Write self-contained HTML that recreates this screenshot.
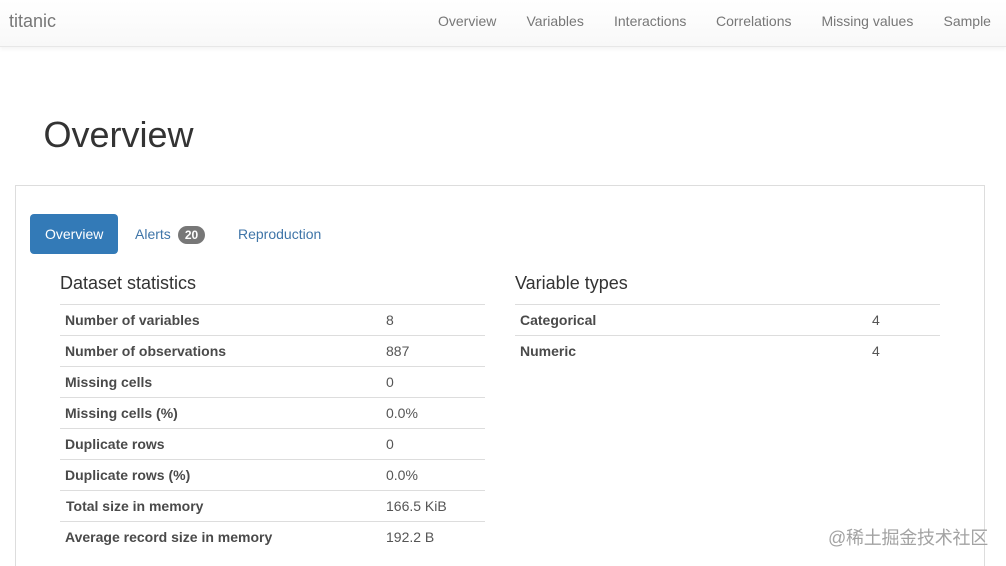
<!DOCTYPE html>
<html lang="en"><head><meta charset="utf-8"><title>titanic</title>
<style>
html,body{margin:0;padding:0;background:#fff;width:1006px;height:566px;overflow:hidden}
body{position:relative;font-family:"Liberation Sans",sans-serif;font-size:14px;color:#444}
.a{position:absolute;white-space:nowrap;line-height:20px;filter:blur(.25px)}
#nav{position:absolute;left:0;top:0;width:1006px;height:46px;background:linear-gradient(#fff,#f8f8f8);border-bottom:1px solid #e7e7e7;box-shadow:0 2px 4px rgba(0,0,0,.05)}
.n{color:#777;top:11px}
#panel{position:absolute;left:15px;top:185px;width:968px;height:380px;border:1px solid #ddd;border-bottom:0}
#tab{position:absolute;left:30px;top:214px;width:88px;height:40px;background:#337ab7;border-radius:4px}
#badge{position:absolute;left:178px;top:226px;width:27px;height:18px;border-radius:9px;background:#777;color:#fff;font-weight:bold;font-size:12px;line-height:18px;text-align:center}
.l{position:absolute;height:1px;background:#ddd}
.h{font-size:18px;color:#333}
.b{font-weight:bold;color:#4a4a4a}
.v{color:#555}
.t{color:#3f75a8}
</style></head><body>
<div id="nav"></div>
<div class="a" style="left:9px;top:11px;font-size:18px;color:#777">titanic</div>
<div class="a n" style="left:438px">Overview</div>
<div class="a n" style="left:526.5px">Variables</div>
<div class="a n" style="left:614px">Interactions</div>
<div class="a n" style="left:716px">Correlations</div>
<div class="a n" style="left:821.5px">Missing values</div>
<div class="a n" style="left:943.5px">Sample</div>

<div class="a" style="left:43.5px;top:115px;font-size:36px;line-height:40px;color:#333">Overview</div>

<div id="panel"></div>
<div id="tab"></div>
<div class="a" style="left:45px;top:224px;color:#fff">Overview</div>
<div class="a t" style="left:135px;top:224px">Alerts</div>
<div id="badge">20</div>
<div class="a t" style="left:238px;top:224px">Reproduction</div>

<div class="a h" style="left:60px;top:273px">Dataset statistics</div>
<div class="a h" style="left:515px;top:273px">Variable types</div>

<div class="l" style="left:60px;top:304px;width:425px"></div>
<div class="l" style="left:60px;top:335px;width:425px"></div>
<div class="l" style="left:60px;top:366px;width:425px"></div>
<div class="l" style="left:60px;top:397px;width:425px"></div>
<div class="l" style="left:60px;top:428px;width:425px"></div>
<div class="l" style="left:60px;top:459px;width:425px"></div>
<div class="l" style="left:60px;top:490px;width:425px"></div>
<div class="l" style="left:60px;top:521px;width:425px"></div>
<div class="l" style="left:515px;top:304px;width:425px"></div>
<div class="l" style="left:515px;top:335px;width:425px"></div>

<div class="a b" style="left:65px;top:310px">Number of variables</div><div class="a v" style="left:386px;top:310px">8</div>
<div class="a b" style="left:65px;top:341px">Number of observations</div><div class="a v" style="left:386px;top:341px">887</div>
<div class="a b" style="left:65px;top:372px">Missing cells</div><div class="a v" style="left:386px;top:372px">0</div>
<div class="a b" style="left:65px;top:403px">Missing cells (%)</div><div class="a v" style="left:386px;top:403px">0.0%</div>
<div class="a b" style="left:65px;top:434px">Duplicate rows</div><div class="a v" style="left:386px;top:434px">0</div>
<div class="a b" style="left:65px;top:465px">Duplicate rows (%)</div><div class="a v" style="left:386px;top:465px">0.0%</div>
<div class="a b" style="left:66px;top:496px">Total size in memory</div><div class="a v" style="left:386px;top:496px">166.5 KiB</div>
<div class="a b" style="left:65px;top:527px">Average record size in memory</div><div class="a v" style="left:386px;top:527px">192.2 B</div>

<div class="a b" style="left:520px;top:310px">Categorical</div><div class="a v" style="left:872px;top:310px">4</div>
<div class="a b" style="left:520px;top:341px">Numeric</div><div class="a v" style="left:872px;top:341px">4</div>

<div class="a" style="left:828px;top:527px;font-size:18px;line-height:22px;letter-spacing:-.25px;color:#a3a3a3;font-family:'Liberation Sans','Noto Sans CJK SC',sans-serif">@稀土掘金技术社区</div>
</body></html>
